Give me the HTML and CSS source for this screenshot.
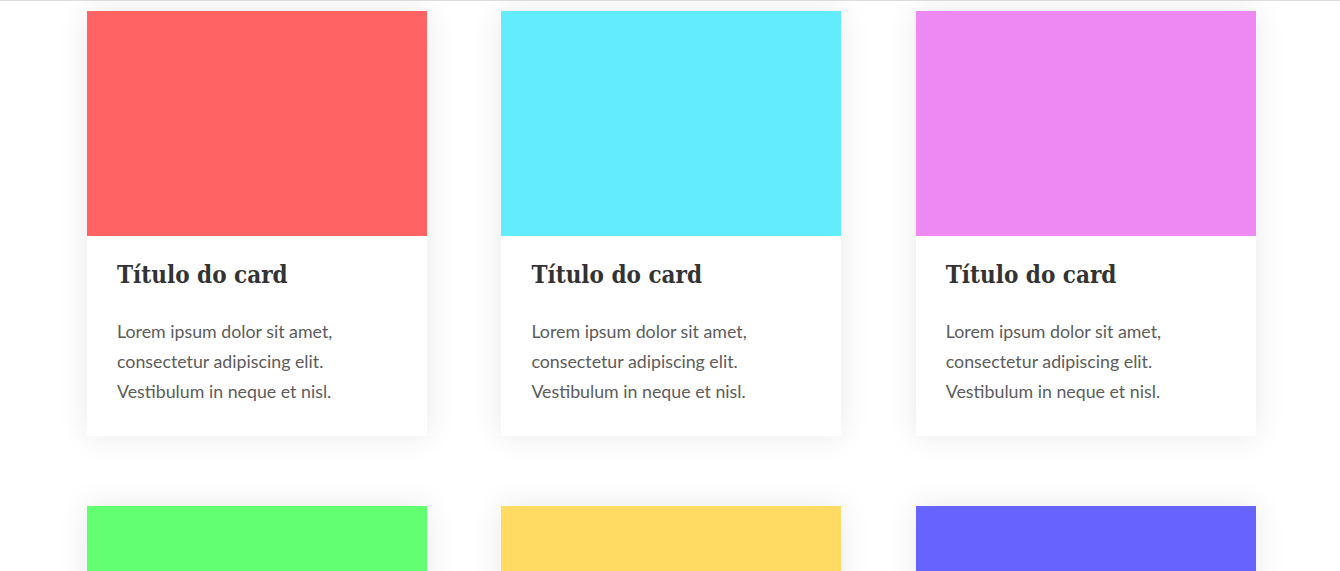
FILE: index.html
```html
<!DOCTYPE html>
<html lang="pt">
<head>
<meta charset="utf-8">
<link rel="stylesheet" href="styles.css">
<title>Cards</title>
</head>
<body>
<main class="grid">
  <article class="card"><div class="thumb red"></div><div class="body"><h2 class="title">Título do card</h2><p class="text">Lorem ipsum dolor sit amet, consectetur adipiscing elit. Vestibulum in neque et nisl.</p></div></article>
  <article class="card"><div class="thumb cyan"></div><div class="body"><h2 class="title">Título do card</h2><p class="text">Lorem ipsum dolor sit amet, consectetur adipiscing elit. Vestibulum in neque et nisl.</p></div></article>
  <article class="card"><div class="thumb pink"></div><div class="body"><h2 class="title">Título do card</h2><p class="text">Lorem ipsum dolor sit amet, consectetur adipiscing elit. Vestibulum in neque et nisl.</p></div></article>
  <article class="card"><div class="thumb green"></div><div class="body"><h2 class="title">Título do card</h2><p class="text">Lorem ipsum dolor sit amet, consectetur adipiscing elit. Vestibulum in neque et nisl.</p></div></article>
  <article class="card"><div class="thumb yellow"></div><div class="body"><h2 class="title">Título do card</h2><p class="text">Lorem ipsum dolor sit amet, consectetur adipiscing elit. Vestibulum in neque et nisl.</p></div></article>
  <article class="card"><div class="thumb blue"></div><div class="body"><h2 class="title">Título do card</h2><p class="text">Lorem ipsum dolor sit amet, consectetur adipiscing elit. Vestibulum in neque et nisl.</p></div></article>
</main>
</body>
</html>
```
FILE: styles.css
```css
html, body {
  margin: 0;
  padding: 0;
  background: #fff;
}
body {
  border-top: 1px solid #dcdcdc;
  font-family: Lato, "Open Sans", sans-serif;
}
.grid {
  display: grid;
  grid-template-columns: repeat(3, 340px);
  column-gap: 74.4px;
  row-gap: 70px;
  padding: 10px 0 0 87px;
}
.card {
  background: #fff;
  box-shadow: 0 0 30px rgba(0, 0, 0, 0.09);
}
.thumb {
  height: 225px;
}
.red { background: #ff6363; }
.cyan { background: #63ecfd; }
.pink { background: #ee88f3; }
.green { background: #63ff73; }
.yellow { background: #ffdb63; }
.blue { background: #6663ff; }
.body {
  padding: 21px 30px 30px;
}
.title {
  margin: 0 0 23px;
  font-family: "DejaVu Serif Condensed", "DejaVu Serif", serif;
  font-weight: bold;
  font-size: 24px;
  line-height: 36px;
  color: #333;
}
.text {
  margin: 0;
  font-size: 17.8px;
  line-height: 30px;
  color: #5c5c5c;
}
```
